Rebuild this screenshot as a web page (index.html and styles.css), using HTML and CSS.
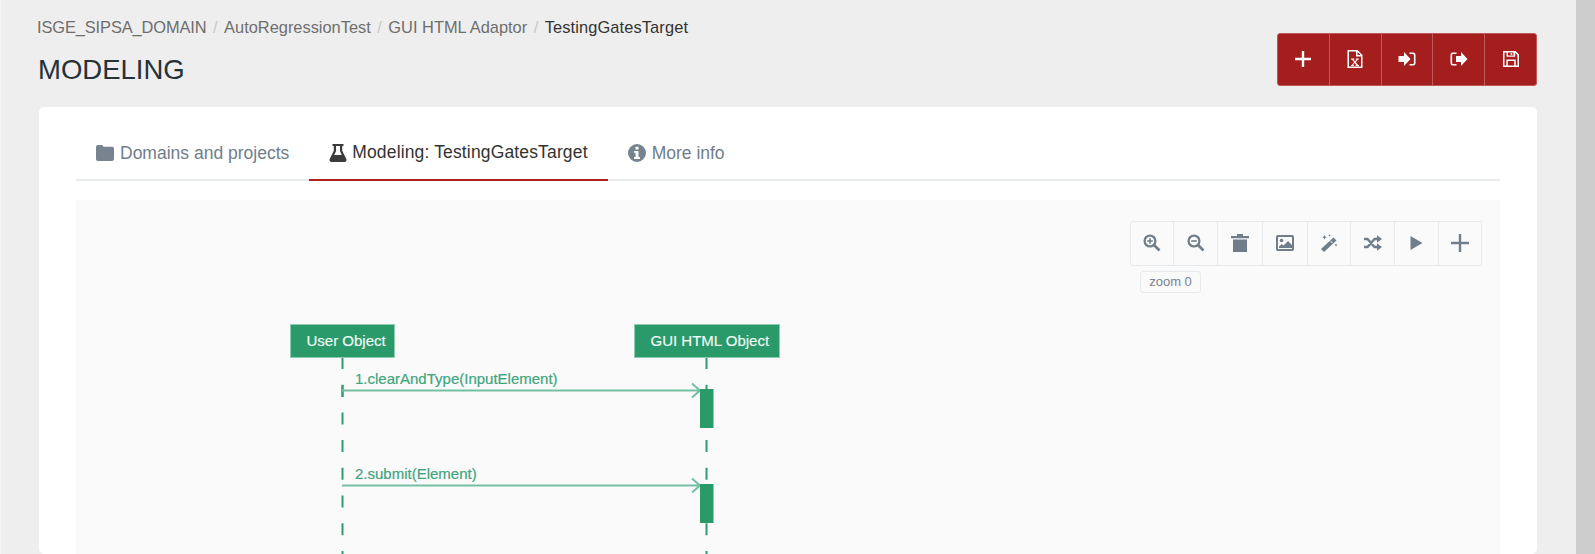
FILE: index.html
```html
<!DOCTYPE html>
<html lang="en">
<head>
<meta charset="utf-8">
<title>Modeling</title>
<link rel="stylesheet" href="styles.css">
</head>
<body>
<div class="page">
  <main class="main">
    <header class="header">
      <div class="titles">
        <nav class="crumbs">
          <a class="crumb-first">ISGE_SIPSA_DOMAIN</a><span class="sep">/</span><a>AutoRegressionTest</a><span class="sep">/</span><a>GUI HTML Adaptor</a><span class="sep">/</span><span class="current">TestingGatesTarget</span>
        </nav>
        <h1 class="title">MODELING</h1>
      </div>
      <div class="actions">
        <button class="action"><svg class="aicon" viewBox="0 0 20 20"><path d="M8.800 2h2.400v6.800H18v2.400h-6.800V18H8.800v-6.800H2V8.800h6.800z"/></svg></button>
        <button class="action"><svg class="aicon" viewBox="0 0 20 20"><path fill-rule="evenodd" d="M2.500 1h10l5 5v13h-15zM4 2.500v15h12V7.500h-5v-5zM12.500 3v3H15.500z"/><path d="M6 9.500h3.200v1h-.7l1.500 2 1.500-2h-.7v-1h3v1h-.9l-2.200 2.700 2.400 2.800h.8v1h-3.300v-1h.7l-1.600-2-1.600 2h.7v1H6v-1h.8l2.400-2.800-2.200-2.700H6z"/></svg></button>
        <button class="action"><svg class="aicon" viewBox="0 0 20 20"><path d="M1.500 7h5.500V3l6.500 7L7 17v-4H1.500z"/><path d="M12.500 3.500h3.700a2.300 2.300 0 0 1 2.300 2.300v8.400a2.300 2.300 0 0 1-2.300 2.300h-3.700v-1.500h3.400a1 1 0 0 0 1-1V6a1 1 0 0 0-1-1h-3.400z"/></svg></button>
        <button class="action"><svg class="aicon" viewBox="0 0 20 20"><path d="M7.500 3.500H3.800a2.300 2.300 0 0 0-2.300 2.300v8.400a2.300 2.300 0 0 0 2.300 2.300h3.700V15H4.100a1 1 0 0 1-1-1V6a1 1 0 0 1 1-1h3.400z"/><path d="M7 7h5V3l6.500 7-6.500 7v-4H7z"/></svg></button>
        <button class="action"><svg class="aicon" viewBox="0 0 20 20"><path fill-rule="evenodd" d="M2 2h12.500L18 5.500V18H2zM3.500 3.500v13h1.800V10.500h9.400v6h1.800V6.200l-2.300-2.400v4H5.500V3.500zM6.800 12v4.500h6.400V12zM7 3.500v3h5.500v-3zM9.700 4h1.500v2H9.700z"/></svg></button>
      </div>
    </header>

    <section class="card">
      <ul class="tabs">
        <li class="tab"><svg class="ticon" viewBox="0 0 18 18"><path d="M0 3c0-1.200.8-2 2-2h3.600c1 0 1.600.8 1.800 1.800h8.600c1.200 0 2 .8 2 2V15c0 1.200-.8 2-2 2H2c-1.200 0-2-.8-2-2z"/></svg>Domains and projects</li>
        <li class="tab tab-active"><svg class="ticon ticon-dark" viewBox="0 0 18 18"><path fill-rule="evenodd" d="M3.500 0h11v2h-1.300v4.700l4.100 8.200c.7 1.500-.2 3.100-1.900 3.100H2.600C.9 18 0 16.400.7 14.900l4.100-8.200V2H3.500zM7 2v5.200L5.200 11h7.600L11 7.200V2z"/></svg>Modeling: TestingGatesTarget</li>
        <li class="tab"><svg class="ticon" viewBox="0 0 18 18"><path fill-rule="evenodd" d="M9 0a9 9 0 1 1 0 18A9 9 0 0 1 9 0zM7.500 2.700v2.700h3V2.700zM6 7v1.700h1.500v4.200H6v2h6v-2h-1.500V7z"/></svg>More info</li>
      </ul>

      <div class="panel">
        <svg class="diagram" viewBox="76 200 1424 354">
          <g class="lifeline">
            <path d="M342.500 357V554"/>
            <path d="M706.500 357V554"/>
          </g>
          <rect class="obj" x="290.500" y="324.500" width="104" height="33"/>
          <text class="obj-label" x="306.500" y="346">User Object</text>
          <rect class="obj" x="634.500" y="324.500" width="145" height="33"/>
          <text class="obj-label" x="650.500" y="346">GUI HTML Object</text>

          <path class="tick" d="M342.500 385V397"/>
          <path class="msg" d="M342 390.500H700M692 383.500L700 390.500L692 397.500"/>
          <text class="msg-label" x="355" y="384">1.clearAndType(InputElement)</text>
          <rect class="bar" x="700" y="389" width="13.500" height="39"/>

          <path class="msg" d="M342 485.500H700M692 478.500L700 485.500L692 492.500"/>
          <text class="msg-label" x="355" y="479">2.submit(Element)</text>
          <rect class="bar" x="700" y="484" width="13.500" height="39"/>
        </svg>

        <div class="tools">
          <div class="toolbar">
            <button class="tool"><svg class="ticon-lens" viewBox="0 0 18 18"><circle class="ring" cx="7" cy="7" r="5.400"/><path class="handle" d="M11 11l5.500 5.500"/><path d="M6.200 4.200h1.600v2h2v1.600h-2v2H6.200v-2h-2V6.200h2z"/></svg></button>
            <button class="tool"><svg class="ticon-lens" viewBox="0 0 18 18"><circle class="ring" cx="7" cy="7" r="5.400"/><path class="handle" d="M11 11l5.500 5.500"/><path d="M4.200 6.200h5.600v1.600H4.200z"/></svg></button>
            <button class="tool"><svg class="ticon-tool" viewBox="0 0 18 18"><path d="M6 0h6v2H6zM0 2h18v2.200H0zM2 5.500h14V18H2z"/></svg></button>
            <button class="tool"><svg class="ticon-tool" viewBox="0 0 18 18"><path fill-rule="evenodd" d="M1.800 1h14.400A1.800 1.800 0 0 1 18 2.800v12.400a1.800 1.800 0 0 1-1.800 1.800H1.800A1.800 1.800 0 0 1 0 15.200V2.800A1.800 1.800 0 0 1 1.800 1zm.2 2v12h14V3z"/><circle cx="5.500" cy="6.500" r="1.800"/><path d="M3 14v-1.500l2.800-2.500 1.700 1.500L12 7l4 4v3z"/></svg></button>
            <button class="tool"><svg class="ticon-tool" viewBox="0 0 18 18"><path d="M13.500 3.500l3 3L4 18l-3-3z"/><path class="cut" d="M10.500 7l2 2"/><path d="M4.500 1l.7 1.600L6.800 3.300l-1.600.7-.7 1.600-.7-1.600-1.600-.7 1.600-.7zM16 9.500l.5 1.100 1.100.5-1.100.5-.5 1.100-.5-1.100-1.100-.5 1.100-.5zM9.500 0l.4 1 1 .4-1 .4-.4 1-.4-1-1-.4 1-.4z"/></svg></button>
            <button class="tool"><svg class="ticon-tool" viewBox="0 0 18 18"><path class="cross" d="M0 5h3.500l7 8h3M0 13h3.500l7-8h3"/><path d="M13 1.300L18 5l-5 3.700zM13 9.300L18 13l-5 3.700z"/></svg></button>
            <button class="tool"><svg class="ticon-tool" viewBox="0 0 18 18"><path d="M2.500 2l12 7-12 7z"/></svg></button>
            <button class="tool"><svg class="ticon-tool" viewBox="0 0 18 18"><path d="M7.800 0h2.400v7.800H18v2.400h-7.800V18H7.800v-7.800H0V7.800h7.800z"/></svg></button>
          </div>
          <div class="zoom">zoom 0</div>
        </div>
      </div>
    </section>
  </main>
  <div class="scrollbar"></div>
</div>
</body>
</html>
```
FILE: styles.css
```css
* { box-sizing: border-box; }
html, body { margin: 0; height: 100%; overflow: hidden; }
body { font-family: "Liberation Sans", Arial, sans-serif; background: #eeeeee; color: #333; }
.page { display: flex; height: 554px; }
.main { flex: 1; min-width: 0; padding: 0 39px 0 36px; border-left: 1px solid #f5f5f5; }
.scrollbar { width: 19px; background: #cdcdcd; }

.header { display: flex; justify-content: space-between; align-items: flex-start; height: 107px; }
.crumbs { font-size: 16.400px; line-height: 24px; padding-top: 15px; color: #6e6e6e; white-space: nowrap; }
.crumb-first { letter-spacing: -0.100px; }
.sep { color: #c8c8c8; padding: 0 6.500px; }
.current { color: #333; letter-spacing: 0.120px; }
.title { margin: 14px 0 0 1px; font-size: 27.500px; font-weight: 400; line-height: 34px; color: #263238; }

.actions { display: flex; width: 260px; margin-top: 33px; height: 53px; background: #a51e1e; border: 1px solid #bf5a5a; border-radius: 3px; }
.action { flex: 1; padding: 0 0 1px; border: 0; border-left: 1px solid #bf5a5a; background: none; display: flex; align-items: center; justify-content: center; }
.action:first-child { border-left: 0; }
.aicon { width: 20px; height: 20px; fill: #fff; }

.card { margin-left: 2px; height: 447px; padding: 21px 37px 0; background: #fff; border-radius: 5px; }
.tabs { display: flex; margin: 0 0 19px; padding: 0; list-style: none; border-bottom: 2px solid #e8ecee; height: 53px; }
.tab { display: flex; align-items: center; gap: 6px; height: 53px; padding: 0 20px 3px; font-size: 17.500px; color: #6f7d8c; white-space: nowrap; }
.tab-active { color: #333; border-bottom: 2px solid #b52020; letter-spacing: 0.150px; gap: 5px; padding-bottom: 2px; }
.ticon { width: 18px; height: 18px; fill: #77848f; }
.ticon-dark { fill: #3b3b3b; }

.panel { position: relative; height: 354px; background: #fafafa; overflow: hidden; }
.diagram { display: block; width: 1424px; height: 354px; }
.lifeline path { stroke: #2f9b6e; stroke-width: 2; stroke-dasharray: 12 15.700; fill: none; }
.obj { fill: #2a9a6b; stroke: #8fcdb3; stroke-width: 1; }
.obj-label { font-size: 15px; fill: #f2faf6; stroke: #f2faf6; stroke-width: 0.150px; font-family: "Liberation Sans", Arial, sans-serif; }
.msg { fill: none; stroke: #74c0a2; stroke-width: 2; }
.tick { stroke: #2f9b6e; stroke-width: 2; }
.msg-label { font-size: 15px; fill: #3fa57f; stroke: #3fa57f; stroke-width: 0.200px; font-family: "Liberation Sans", Arial, sans-serif; }
.bar { fill: #2a9a6b; }

.tools { position: absolute; top: 21px; right: 18px; }
.toolbar { display: flex; height: 45px; border: 1px solid #e6eaed; border-radius: 3px 0 0 3px; }
.tool { width: 44px; padding: 0 0 2px; border: 0; border-left: 1px solid #e6eaed; background: none; display: flex; align-items: center; justify-content: center; }
.tool:first-child { border-left: 0; width: 42px; }
.tool:nth-child(3), .tool:nth-child(4) { width: 45px; }
.tool:nth-child(5), .tool:last-child { width: 43px; }
.ticon-lens { width: 18px; height: 18px; fill: #707e8b; }
.ticon-tool { width: 18px; height: 18px; fill: #707e8b; }
.ring { fill: none; stroke: #707e8b; stroke-width: 2.300; }
.handle { fill: none; stroke: #707e8b; stroke-width: 2.600; }
.cross { fill: none; stroke: #707e8b; stroke-width: 2.400; }
.cut { stroke: #fafafa; stroke-width: 1; fill: none; }
.zoom { margin: 5px 0 0 10px; width: 61px; height: 22px; font-size: 13px; line-height: 20px; text-align: center; color: #78838f; border: 1px solid #e6eaed; border-radius: 3px; }
```
